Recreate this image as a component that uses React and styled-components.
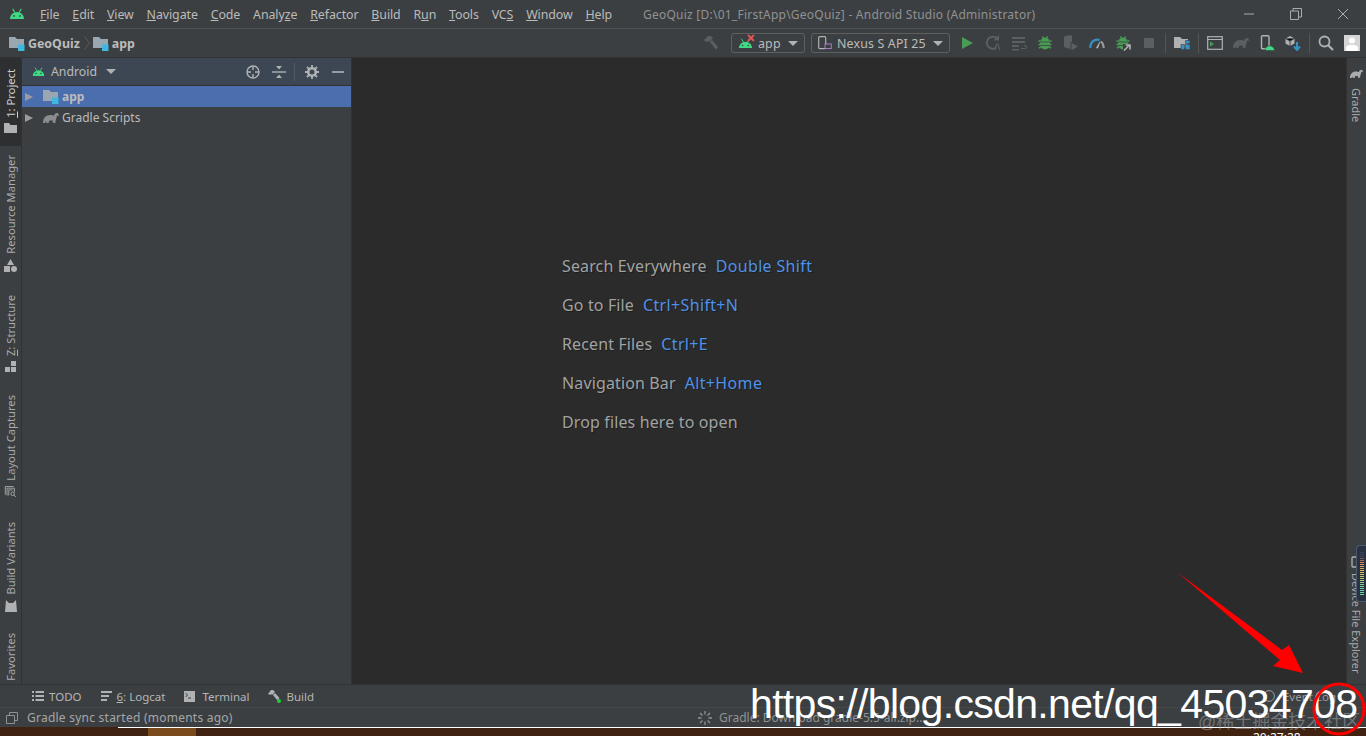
import styled, { createGlobalStyle } from "styled-components";

const GlobalStyle = createGlobalStyle`
  html, body {
    margin: 0;
    height: 100%;
    overflow: hidden;
    background: #3c3f41;
  }
  #root {
    height: 736px;
  }
`;

const Page = styled.div`
  position: relative;
  width: 1366px;
  height: 736px;
  display: flex;
  flex-direction: column;
  overflow: hidden;
  background: #3c3f41;
  color: #bbbbbb;
  font-family: "Noto Sans", "Open Sans", sans-serif;
  font-size: 12px;
`;

const TitleBar = styled.div`
  height: 28px;
  flex: none;
  display: flex;
  align-items: center;
  border-bottom: 1px solid #515151;
`;
const Logo = styled.div`
  width: 36px;
  padding-left: 9px;
  display: flex;
`;
const Menu = styled.div`
  display: flex;
  gap: 12.8px;
  margin-left: -5px;
  font-size: 12.4px;
  letter-spacing: -0.08px;
  width: 603px;
  white-space: nowrap;
`;
const WindowTitle = styled.div`
  color: #8f9294;
  font-size: 12px;
  letter-spacing: 0.24px;
  white-space: nowrap;
`;
const WindowButtons = styled.div`
  margin-left: auto;
  display: flex;
  color: #a9abad;
`;
const WindowButton = styled.div`
  width: 47px;
  display: flex;
  justify-content: center;
`;

const NavBar = styled.div`
  height: 28px;
  flex: none;
  display: flex;
  align-items: center;
  padding: 0 1px 0 9px;
  border-bottom: 1px solid #323232;
`;
const Crumb = styled.div`
  display: flex;
  align-items: center;
  gap: 3px;
  font-weight: 700;
  font-size: 12.4px;
`;
const CrumbArrow = styled.div`
  margin: 0 3px 0 4px;
  display: flex;
`;
const Toolbar = styled.div`
  margin-left: auto;
  display: flex;
  align-items: center;
`;
const ToolIcon = styled.div`
  width: 26px;
  height: 22px;
  display: flex;
  align-items: center;
  justify-content: center;
`;
const Combo = styled.div`
  height: 20px;
  width: ${(p) => p.$width}px;
  box-sizing: border-box;
  margin: 0 ${(p) => p.$after || 0}px 0 ${(p) => p.$gap || 0}px;
  padding: 0 6px;
  display: flex;
  align-items: center;
  gap: 5px;
  border: 1px solid #5e6060;
  border-radius: 3px;
  font-size: 12.4px;
  letter-spacing: 0.16px;
  white-space: nowrap;
`;
const ComboBadge = styled.span`
  position: relative;
  display: flex;
`;
const ComboCross = styled.svg`
  position: absolute;
  right: -2px;
  top: -4px;
`;
const Caret = styled.div`
  margin-left: auto;
  width: 0;
  height: 0;
  border-left: 5px solid transparent;
  border-right: 5px solid transparent;
  border-top: 5px solid #afb1b3;
`;
const ToolSep = styled.div`
  width: 1px;
  height: 20px;
  background: #515556;
  margin: 0 3px;
`;

const Main = styled.div`
  flex: 1;
  min-height: 0;
  display: flex;
`;
const LeftStrip = styled.div`
  width: 21px;
  flex: none;
  display: flex;
  flex-direction: column;
  border-right: 1px solid #323232;
`;
const SideTab = styled.div`
  height: ${(p) => p.$height}px;
  flex: none;
  box-sizing: border-box;
  display: flex;
  align-items: center;
  justify-content: flex-start;
  gap: 5px;
  padding-bottom: ${(p) => p.$bottom || 0}px;
  flex-direction: column-reverse;
  background: ${(p) => (p.$active ? "#2d2f30" : "transparent")};
  color: ${(p) => (p.$active ? "#d0d0d0" : "#a9abad")};
`;
const SideLabel = styled.span`
  writing-mode: vertical-rl;
  transform: rotate(180deg);
  font-size: 11.2px;
  line-height: 21px;
  white-space: nowrap;
`;
const Gap = styled.div`
  height: ${(p) => p.$size}px;
  flex: none;
`;

const Project = styled.div`
  width: 329px;
  flex: none;
  border-right: 1px solid #323232;
`;
const ProjectHeader = styled.div`
  height: 28px;
  box-sizing: border-box;
  display: flex;
  align-items: center;
  background: #3d4753;
  padding: 0 6px 0 10px;
  border-bottom: 1px solid #323232;
`;
const ViewName = styled.div`
  display: flex;
  align-items: center;
  gap: 6px;
  font-size: 12.3px;
  width: 84px;
`;
const HeaderIcons = styled.div`
  margin-left: auto;
  display: flex;
  align-items: center;
  gap: 12px;
`;
const HeaderSep = styled.div`
  width: 1px;
  height: 18px;
  background: #515a63;
  margin: 0 -2px 0 -4px;
`;
const TreeRow = styled.div`
  height: 21px;
  display: flex;
  align-items: center;
  padding-left: 3px;
  gap: 3px;
  background: ${(p) => (p.$selected ? "#4b6eaf" : "transparent")};
  font-weight: ${(p) => (p.$selected ? 700 : 400)};
  font-size: 12px;
`;
const TreeArrow = styled.div`
  width: 0;
  height: 0;
  border-top: 4.5px solid transparent;
  border-bottom: 4.5px solid transparent;
  border-left: 8px solid #9a9c9e;
  margin-right: 7px;
`;

const Editor = styled.div`
  flex: 1;
  background: #2b2b2b;
  padding: 189px 0 0 210px;
  font-size: 16px;
  letter-spacing: 0.13px;
  color: #a0a2a3;
`;
const Hint = styled.div`
  height: 39px;
  line-height: 39px;
  white-space: nowrap;
  text-shadow: 1px 1px 0 #1e1e1e;
`;
const Keys = styled.span`
  color: #4e92e8;
  margin-left: 9px;
  letter-spacing: 0.35px;
`;

const RightStrip = styled.div`
  width: 20px;
  flex: none;
  box-sizing: border-box;
  display: flex;
  flex-direction: column;
  align-items: center;
  border-left: 1px solid #323232;
  color: #a9abad;
  padding: 11px 1px 0 0;
`;
const RightLabel = styled.span`
  writing-mode: vertical-rl;
  font-size: 11px;
  white-space: nowrap;
  line-height: 20px;
`;

const ToolStrip = styled.div`
  height: 23px;
  flex: none;
  box-sizing: border-box;
  display: flex;
  align-items: center;
  border-top: 1px solid #323232;
  padding-left: 32px;
  gap: 19px;
  color: #b4b6b8;
`;
const ToolTab = styled.div`
  display: flex;
  align-items: center;
  gap: ${(p) => p.$gap || 5}px;
  font-size: 11.5px;
`;
const EventLog = styled.div`
  margin-left: auto;
  margin-right: 30px;
  display: flex;
  align-items: center;
  gap: 8px;
  font-size: 11.5px;
  color: #9a9c9e;
`;
const StatusBar = styled.div`
  height: 20px;
  flex: none;
  box-sizing: border-box;
  display: flex;
  align-items: center;
  padding-left: 6px;
  border-top: 1px solid #464849;
  color: #a4a6a8;
  font-size: 12px;
`;
const StatusText = styled.span`
  margin-left: 9px;
  width: 671px;
  letter-spacing: 0.24px;
`;
const Progress = styled.div`
  display: flex;
  align-items: center;
  gap: 7px;
  color: #8f9294;
`;

const Taskbar = styled.div`
  height: 9px;
  flex: none;
  display: flex;
  background: #3f2210;
  overflow: hidden;
  position: relative;
`;
const TaskEdge = styled.div`
  width: ${(p) => p.$width}px;
  flex: none;
  background: ${(p) => p.$color};
  border-top: 1px solid ${(p) => p.$line};
`;
const Clock = styled.span`
  position: absolute;
  left: 1253px;
  top: 5px;
  color: #ffffff;
  font-size: 12px;
  line-height: 12px;
`;

const Annotations = styled.svg`
  position: absolute;
  left: 0;
  top: 0;
  pointer-events: none;
`;
const Watermark = styled.div`
  position: absolute;
  left: 750px;
  top: 680px;
  font-family: "Liberation Sans", Arial, sans-serif;
  font-size: 41px;
  letter-spacing: -0.66px;
  line-height: 48px;
  color: #ffffff;
  white-space: nowrap;
`;
const Stamp = styled.div`
  position: absolute;
  left: 1198px;
  top: 707px;
  font-family: "Liberation Sans", "Noto Sans CJK SC", sans-serif;
  font-size: 18px;
  color: rgba(170, 170, 170, 0.5);
  white-space: nowrap;
`;
const Meter = styled.div`
  position: absolute;
  right: 0;
  top: 545px;
  width: 10px;
  height: 57px;
  box-sizing: border-box;
  border: 1px solid #4a5a70;
  border-right: 0;
  border-radius: 4px 0 0 4px;
  background: #2a3140;
  display: flex;
  justify-content: flex-end;
  padding: 6px 2px 6px 0;
`;
const MeterTicks = styled.div`
  width: 4px;
  background: repeating-linear-gradient(
      to bottom,
      transparent 0 1px,
      #2a3140 1px 2px
    ),
    linear-gradient(to bottom, #3a4356 10%, #e08a5a 25%, #d8c860 50%, #6fd0a8 85%);
`;

const AndroidHead = ({ size = 16, color = "#3ddc84" }) => (
  <svg width={size} height={size * 0.72} viewBox="0 0 18 13">
    <path d="M1 12.500a8 8 0 0 1 16 0z" fill={color} />
    <path d="M4.200 1l2.400 4M13.800 1l-2.400 4" stroke={color} strokeWidth="1.200" />
    <circle cx="5.600" cy="9" r="1" fill="#3c3f41" />
    <circle cx="12.400" cy="9" r="1" fill="#3c3f41" />
  </svg>
);

const ModuleFolder = () => (
  <svg width="16" height="15" viewBox="0 0 16 15">
    <path d="M0 1h6l2 2h7v9H0z" fill="#9aa7b0" />
    <rect x="9" y="8.500" width="6.500" height="6.500" fill="#40b6e0" />
  </svg>
);

const Elephant = ({ color = "#8a8c8e", width = 16 }) => (
  <svg width={width} height={width * 0.7} viewBox="0 0 16 11">
    <path
      d="M0 11c0-5 3-8 7-8 2 0 3 .6 4 .6 .5-2 2-3 3.400-2.600 1.200.4 1.600 1.600 1.400 3l-1.800-.6-.6 2.400c-.5 1.600-1 3-1 5h-2.400l-.4-2.400H6.400L5.600 11H3.400l-.4-2-1 2z"
      fill={color}
    />
  </svg>
);

const Hammer = ({ color = "#5c5f61" }) => (
  <svg width="16" height="16" viewBox="0 0 16 16">
    <path d="M1 5l4-4h3l2 2-4 4-1-1-2 1z" fill={color} />
    <path d="M7 7l2-2 6 7-2.400 2.400z" fill={color} />
  </svg>
);

const BugIcon = ({ color = "#499c54", arrow }) => (
  <svg width="16" height="16" viewBox="0 0 16 16">
    <path
      d="M1.500 6h2M14.500 6h-2M1.500 9.500h2M14.500 9.500h-2M2 13l2-1M14 13l-2-1M5.500 1.500l1 2M10.500 1.500l-1 2"
      stroke={color}
      strokeWidth="1.600"
    />
    <ellipse cx="8" cy="8.500" rx="5" ry="6" fill={color} />
    <path d="M3.500 7h9M3.500 10.500h9" stroke="#3c3f41" strokeWidth=".8" />
    {arrow && (
      <g>
        <rect x="8" y="9" width="8" height="7" fill="#3c3f41" />
        <path d="M9 15.500l5-5M10.500 10h4.500v4.500" stroke="#afb1b3" strokeWidth="1.600" fill="none" />
      </g>
    )}
  </svg>
);

const icons = {
  run: (
    <svg width="14" height="14" viewBox="0 0 14 14">
      <path d="M2 1l11 6-11 6z" fill="#499c54" />
    </svg>
  ),
  rerun: (
    <svg width="16" height="16" viewBox="0 0 16 16">
      <path d="M12.500 4a6 6 0 1 0 -1 8.500" stroke="#5c5f61" strokeWidth="2" fill="none" />
      <path d="M8.500 5.500h5.500V0z" fill="#5c5f61" />
      <path d="M9.500 15l2.200-6h1l2.200 6" stroke="#5c5f61" strokeWidth="1.200" fill="none" />
    </svg>
  ),
  apply: (
    <svg width="16" height="16" viewBox="0 0 16 16">
      <path d="M1 2h13v2H1zM1 6h13v2H1zM1 10h7v2H1zM1 14h7v1.500H1z" fill="#5c5f61" />
      <path d="M10 13.500h4a1.500 1.500 0 0 0 0-3h-1" stroke="#5c5f61" fill="none" />
    </svg>
  ),
  attach: (
    <svg width="16" height="16" viewBox="0 0 16 16">
      <path d="M1 1.500l6-1.500 2 1v12l-2 1-6-2z" fill="#5c5f61" />
      <path d="M8 7l8 4.500-8 4.500z" fill="#5c5f61" stroke="#3c3f41" />
    </svg>
  ),
  profile: (
    <svg width="16" height="16" viewBox="0 0 16 16">
      <path d="M1.500 13a7 7 0 0 1 9-8" stroke="#3592c4" strokeWidth="2.200" fill="none" />
      <path d="M12 6.500a7 7 0 0 1 2.500 6.500" stroke="#9a9c9e" strokeWidth="2.200" fill="none" />
      <path d="M7 13l4-7 .5.300-2.500 7.200z" fill="#afb1b3" />
    </svg>
  ),
  stop: (
    <svg width="14" height="14" viewBox="0 0 14 14">
      <rect x="2" y="2" width="10" height="10" fill="#5c5f61" />
    </svg>
  ),
  project: (
    <svg width="16" height="14" viewBox="0 0 16 14">
      <path d="M0 1h6l2 2h6v9H0z" fill="#afb1b3" />
      <path d="M7 8.500h3.500v5H7zM11.500 8.500H16v5h-4.500zM11.500 4.500H16v3h-4.500z" fill="#3592c4" stroke="#3c3f41" strokeWidth=".6" />
    </svg>
  ),
  logcatRun: (
    <svg width="16" height="14" viewBox="0 0 16 14">
      <rect x=".7" y=".7" width="14.600" height="12.600" fill="none" stroke="#afb1b3" strokeWidth="1.200" />
      <path d="M.7 3.500h14.600" stroke="#afb1b3" />
      <path d="M3 5.500l4 2.500-4 2.500z" fill="#499c54" />
    </svg>
  ),
  device: (
    <svg width="16" height="16" viewBox="0 0 16 16">
      <rect x="2.500" y=".7" width="7.500" height="13" rx="1" fill="none" stroke="#afb1b3" strokeWidth="1.400" />
      <path d="M6 15.500a4.500 4.500 0 0 1 9.500 0z" fill="#3ddc84" stroke="#3c3f41" strokeWidth=".6" />
    </svg>
  ),
  sdk: (
    <svg width="16" height="16" viewBox="0 0 16 16">
      <path d="M.5 3.500L5 1l4.500 2.500v5L5 11 .5 8.500z" fill="#afb1b3" />
      <path d="M5 6v5M.5 3.500L5 6l4.500-2.500" stroke="#3c3f41" />
      <path d="M12 7v7M9 11.500l3 3.500 3-3.500" stroke="#3592c4" strokeWidth="2" fill="none" />
    </svg>
  ),
  search: (
    <svg width="16" height="16" viewBox="0 0 16 16">
      <circle cx="6.500" cy="6.500" r="5" fill="none" stroke="#afb1b3" strokeWidth="1.800" />
      <path d="M10 10l5 5" stroke="#afb1b3" strokeWidth="2.200" />
    </svg>
  ),
  avatar: (
    <svg width="16" height="16" viewBox="0 0 16 16">
      <rect width="16" height="16" fill="#d5d5d5" />
      <circle cx="8" cy="5.500" r="3" fill="#ffffff" />
      <path d="M2 16v-3c0-2 3-3.200 6-3.200s6 1.200 6 3.200v3z" fill="#ffffff" />
    </svg>
  ),
};

const Mnemonic = ({ before = "", letter, after = "" }) => (
  <span>
    {before}
    <u>{letter}</u>
    {after}
  </span>
);

const menuItems = [
  ["", "F", "ile"],
  ["", "E", "dit"],
  ["", "V", "iew"],
  ["", "N", "avigate"],
  ["", "C", "ode"],
  ["Analy", "z", "e"],
  ["", "R", "efactor"],
  ["", "B", "uild"],
  ["R", "u", "n"],
  ["", "T", "ools"],
  ["VC", "S", ""],
  ["", "W", "indow"],
  ["", "H", "elp"],
];

const hints = [
  ["Search Everywhere", "Double Shift"],
  ["Go to File", "Ctrl+Shift+N"],
  ["Recent Files", "Ctrl+E"],
  ["Navigation Bar", "Alt+Home"],
  ["Drop files here to open", ""],
];

export default function App() {
  return (
    <Page>
      <GlobalStyle />
      <TitleBar>
        <Logo>
          <AndroidHead />
        </Logo>
        <Menu>
          {menuItems.map(([before, letter, after]) => (
            <Mnemonic key={before + letter + after} before={before} letter={letter} after={after} />
          ))}
        </Menu>
        <WindowTitle>GeoQuiz [D:\01_FirstApp\GeoQuiz] - Android Studio (Administrator)</WindowTitle>
        <WindowButtons>
          <WindowButton>
            <svg width="12" height="12" viewBox="0 0 12 12">
              <path d="M1 6h10" stroke="currentColor" />
            </svg>
          </WindowButton>
          <WindowButton>
            <svg width="12" height="12" viewBox="0 0 12 12">
              <path d="M.5 3h8v8.500h-8zM3 3V.5h8.500V9H9" stroke="currentColor" fill="none" />
            </svg>
          </WindowButton>
          <WindowButton>
            <svg width="12" height="12" viewBox="0 0 12 12">
              <path d="M1 1l10 10M11 1L1 11" stroke="currentColor" />
            </svg>
          </WindowButton>
        </WindowButtons>
      </TitleBar>

      <NavBar>
        <Crumb>
          <ModuleFolder />
          GeoQuiz
        </Crumb>
        <CrumbArrow>
          <svg width="6" height="14" viewBox="0 0 6 14">
            <path d="M.5 .5l5 6.500-5 6.500" stroke="#585b5d" fill="none" />
          </svg>
        </CrumbArrow>
        <Crumb>
          <ModuleFolder />
          app
        </Crumb>
        <Toolbar>
          <ToolIcon>
            <Hammer />
          </ToolIcon>
          <Combo $width={74} $gap={7}>
            <ComboBadge>
              <AndroidHead size={15} />
              <ComboCross width="8" height="8" viewBox="0 0 8 8">
                <path d="M1 1l6 6M7 1L1 7" stroke="#e05555" strokeWidth="1.800" />
              </ComboCross>
            </ComboBadge>
            app
            <Caret />
          </Combo>
          <Combo $width={139} $gap={6} $after={4}>
            <svg width="14" height="14" viewBox="0 0 14 14">
              <rect x=".7" y=".7" width="7" height="12" rx="1" fill="none" stroke="#afb1b3" strokeWidth="1.200" />
              <rect x="7" y="8" width="6.300" height="4.500" fill="#3c3f41" stroke="#a87cc4" />
            </svg>
            Nexus S API 25
            <Caret />
          </Combo>
          <ToolIcon>{icons.run}</ToolIcon>
          <ToolIcon>{icons.rerun}</ToolIcon>
          <ToolIcon>{icons.apply}</ToolIcon>
          <ToolIcon>
            <BugIcon />
          </ToolIcon>
          <ToolIcon>{icons.attach}</ToolIcon>
          <ToolIcon>{icons.profile}</ToolIcon>
          <ToolIcon>
            <BugIcon arrow />
          </ToolIcon>
          <ToolIcon>{icons.stop}</ToolIcon>
          <ToolSep />
          <ToolIcon>{icons.project}</ToolIcon>
          <ToolSep />
          <ToolIcon>{icons.logcatRun}</ToolIcon>
          <ToolIcon>
            <Elephant color="#5c5f61" />
          </ToolIcon>
          <ToolIcon>{icons.device}</ToolIcon>
          <ToolIcon>{icons.sdk}</ToolIcon>
          <ToolSep />
          <ToolIcon>{icons.search}</ToolIcon>
          <ToolIcon>{icons.avatar}</ToolIcon>
        </Toolbar>
      </NavBar>

      <Main>
        <LeftStrip>
          <SideTab $height={88} $active $bottom={13}>
            <svg width="13" height="10" viewBox="0 0 13 10">
              <path d="M0 0h5l1.500 2H13v8H0z" fill="#afb1b3" />
            </svg>
            <SideLabel>
              <u>1</u>: Project
            </SideLabel>
          </SideTab>
          <Gap $size={9} />
          <SideTab $height={117}>
            <svg width="13" height="13" viewBox="0 0 13 13">
              <path d="M6.500 0l3.500 6H3z" fill="#afb1b3" />
              <rect x="0" y="7" width="6" height="6" fill="#afb1b3" />
              <circle cx="10" cy="10" r="3" fill="#afb1b3" />
            </svg>
            <SideLabel>Resource Manager</SideLabel>
          </SideTab>
          <Gap $size={22} />
          <SideTab $height={78}>
            <svg width="11" height="11" viewBox="0 0 11 11">
              <path d="M6 0h5v5H6zM0 6h5v5H0zM6 6h5v5H6z" fill="#afb1b3" />
            </svg>
            <SideLabel>
              <u>Z</u>: Structure
            </SideLabel>
          </SideTab>
          <Gap $size={23} />
          <SideTab $height={102}>
            <svg width="13" height="13" viewBox="0 0 13 13">
              <path d="M.5 10V.5H10M2.500 11V2.500H11V7M4.500 11V4.500H9" stroke="#afb1b3" fill="none" />
              <circle cx="9" cy="9" r="2" stroke="#afb1b3" fill="none" />
              <path d="M10.500 10.500L13 13" stroke="#afb1b3" />
            </svg>
            <SideLabel>Layout Captures</SideLabel>
          </SideTab>
          <Gap $size={24} />
          <SideTab $height={91}>
            <svg width="12" height="12" viewBox="0 0 12 12">
              <path d="M1 0l3 3h4l3-3 1 12H0z" fill="#afb1b3" />
            </svg>
            <SideLabel>Build Variants</SideLabel>
          </SideTab>
          <Gap $size={21} />
          <SideTab $height={48}>
            <SideLabel>Favorites</SideLabel>
          </SideTab>
        </LeftStrip>

        <Project>
          <ProjectHeader>
            <ViewName>
              <AndroidHead size={13} />
              Android
              <Caret />
            </ViewName>
            <HeaderIcons>
              <svg width="14" height="14" viewBox="0 0 14 14">
                <circle cx="7" cy="7" r="6" fill="none" stroke="#afb1b3" strokeWidth="1.400" />
                <path d="M7 1v4M7 9v4M1 7h4M9 7h4" stroke="#afb1b3" strokeWidth="1.400" />
              </svg>
              <svg width="14" height="14" viewBox="0 0 14 14">
                <path d="M0 7h14" stroke="#afb1b3" strokeWidth="1.400" />
                <path d="M4 1h6L7 4.500zM4 13h6L7 9.500z" fill="#afb1b3" />
              </svg>
              <HeaderSep />
              <svg width="14" height="14" viewBox="0 0 14 14">
                <circle cx="7" cy="7" r="3.800" fill="none" stroke="#afb1b3" strokeWidth="2.600" />
                <path d="M7 0v3M7 11v3M0 7h3M11 7h3M2 2l2 2M10 10l2 2M12 2l-2 2M4 10l-2 2" stroke="#afb1b3" strokeWidth="1.800" />
              </svg>
              <svg width="14" height="14" viewBox="0 0 14 14">
                <path d="M1 7h12" stroke="#afb1b3" strokeWidth="1.600" />
              </svg>
            </HeaderIcons>
          </ProjectHeader>
          <TreeRow $selected>
            <TreeArrow />
            <ModuleFolder />
            app
          </TreeRow>
          <TreeRow>
            <TreeArrow />
            <Elephant />
            Gradle Scripts
          </TreeRow>
        </Project>

        <Editor>
          {hints.map(([label, keys]) => (
            <Hint key={label}>
              {label}
              {keys && <Keys>{keys}</Keys>}
            </Hint>
          ))}
        </Editor>

        <RightStrip>
          <Elephant color="#a9abad" width={13} />
          <Gap $size={10} />
          <RightLabel>Gradle</RightLabel>
          <Gap $size={434} />
          <svg width="10" height="12" viewBox="0 0 10 12">
            <rect x="1" y="1" width="8" height="10" rx="1" fill="none" stroke="#afb1b3" strokeWidth="1.300" />
          </svg>
          <Gap $size={5} />
          <RightLabel>Device File Explorer</RightLabel>
        </RightStrip>
      </Main>

      <ToolStrip>
        <ToolTab>
          <svg width="12" height="10" viewBox="0 0 12 10">
            <path d="M0 0h2v2H0zM0 4h2v2H0zM0 8h2v2H0zM3.500 0H12v2H3.500zM3.500 4H12v2H3.500zM3.500 8H12v2H3.500z" fill="#afb1b3" />
          </svg>
          TODO
        </ToolTab>
        <ToolTab>
          <svg width="11" height="10" viewBox="0 0 11 10">
            <path d="M0 0h11v2H0zM0 4h8v2H0zM0 8h6v2H0z" fill="#afb1b3" />
          </svg>
          <span>
            <u>6</u>: Logcat
          </span>
        </ToolTab>
        <ToolTab $gap={7}>
          <svg width="11" height="11" viewBox="0 0 11 11">
            <rect width="11" height="11" fill="#afb1b3" />
            <path d="M1.500 2l2 2-2 2M4 7h3" stroke="#3c3f41" fill="none" />
          </svg>
          Terminal
        </ToolTab>
        <ToolTab>
          <svg width="13" height="13" viewBox="0 0 13 13">
            <path d="M0 4l3-4h2l2 2-3 3-1-1-1 1zM5 5l2-2 4.500 5-2.200 2.200z" fill="#afb1b3" />
            <circle cx="11" cy="11" r="2" fill="#19d13a" />
          </svg>
          Build
        </ToolTab>
        <EventLog>
          <svg width="12" height="12" viewBox="0 0 12 12">
            <circle cx="6" cy="6" r="5.400" fill="none" stroke="#9a9c9e" />
          </svg>
          Event Log
        </EventLog>
      </ToolStrip>

      <StatusBar>
        <svg width="12" height="12" viewBox="0 0 12 12">
          <path d="M.5 3.500h8v8h-8zM3.500 3.500v-3h8v8h-3" stroke="#8f9294" fill="none" />
        </svg>
        <StatusText>Gradle sync started (moments ago)</StatusText>
        <Progress>
          <svg width="14" height="14" viewBox="0 0 14 14">
            <path
              d="M7 0v3.500M7 10.500V14M0 7h3.500M10.500 7H14M2 2l2.500 2.500M9.500 9.500L12 12M12 2L9.500 4.500M4.500 9.500L2 12"
              stroke="#8f9294"
              strokeWidth="1.300"
            />
          </svg>
          Gradle: Download gradle-5.5-all.zip...
        </Progress>
      </StatusBar>

      <Taskbar>
        <TaskEdge $width={118} $color="#3f2210" $line="#3f2210" />
        <TaskEdge $width={30} $color="#3f2210" $line="#ffffff" />
        <TaskEdge $width={48} $color="#7a4a1c" $line="#ffffff" />
        <TaskEdge $width={1170} $color="#3f2210" $line="#ffffff" />
        <Clock>20:27:28</Clock>
      </Taskbar>

      <Meter>
        <MeterTicks />
      </Meter>
      <Stamp>@稀土掘金技术社区</Stamp>
      <Watermark>https://blog.csdn.net/qq_45034708</Watermark>
      <Annotations width="1366" height="736" viewBox="0 0 1366 736">
        <path d="M1177 572L1282 650 1289 645 1303 673 1273 666 1280 660z" fill="#ff0000" />
        <ellipse cx="1339" cy="709" rx="25" ry="25" fill="none" stroke="#ff0000" strokeWidth="3" />
      </Annotations>
    </Page>
  );
}
